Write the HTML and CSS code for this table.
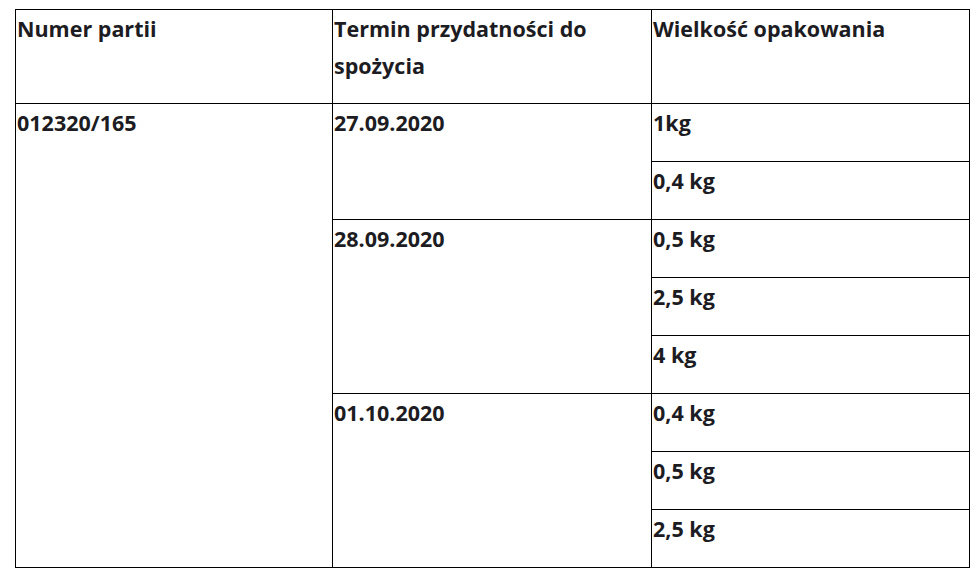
FILE: index.html
```html
<!DOCTYPE html>
<html lang="pl">
<head>
<meta charset="utf-8">
<title>Partie</title>
<link rel="stylesheet" href="styles.css">
</head>
<body>
<table class="batch-table">
  <thead>
    <tr>
      <th class="col-batch">Numer partii</th>
      <th class="col-date">Termin przydatności do spożycia</th>
      <th>Wielkość opakowania</th>
    </tr>
  </thead>
  <tbody>
    <tr>
      <td rowspan="8">012320/165</td>
      <td rowspan="2">27.09.2020</td>
      <td>1kg</td>
    </tr>
    <tr><td>0,4 kg</td></tr>
    <tr>
      <td rowspan="3">28.09.2020</td>
      <td>0,5 kg</td>
    </tr>
    <tr><td>2,5 kg</td></tr>
    <tr><td>4 kg</td></tr>
    <tr>
      <td rowspan="3">01.10.2020</td>
      <td>0,4 kg</td>
    </tr>
    <tr><td>0,5 kg</td></tr>
    <tr><td>2,5 kg</td></tr>
  </tbody>
</table>
</body>
</html>
```

FILE: styles.css
```css
html, body {
  margin: 0;
  padding: 0;
  background: #fff;
}

body {
  padding: 9px 0 0 15px;
  font-family: "Open Sans", "Liberation Sans", sans-serif;
  color: #1c1c22;
}

.batch-table {
  border-collapse: collapse;
  table-layout: fixed;
  width: 955px;
}

.batch-table th,
.batch-table td {
  border: 1px solid #000;
  padding: 0 0 20px 1px;
  font-size: 21.5px;
  font-weight: 700;
  line-height: 37px;
  text-align: left;
  vertical-align: top;
}

.batch-table th {
  padding-bottom: 19px;
}

.batch-table .col-batch { width: 315px; }
.batch-table .col-date { width: 317px; }
```
